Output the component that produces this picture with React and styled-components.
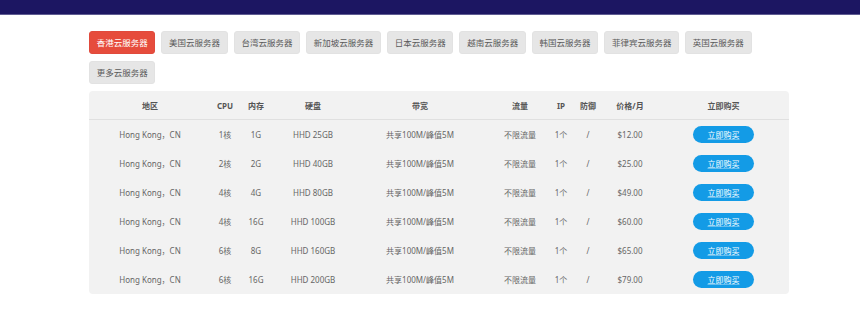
import React from "react";
import styled, { createGlobalStyle } from "styled-components";

const Global = createGlobalStyle`
  html, body { margin: 0; padding: 0; background: #fff; }
  body { font-family: "Noto Sans", "Noto Sans CJK SC", sans-serif; }
  * { box-sizing: border-box; }
`;

const TopBand = styled.div`
  height: 15px;
  background: #1c1662;
  border-bottom: 1px solid #5f5c92;
`;

const Main = styled.main`
  padding: 16px 71px 0 89px;
`;

const Tabs = styled.div`
  display: flex;
  flex-wrap: wrap;
  gap: 7px 6px;
  margin-bottom: 7px;
`;

const Tab = styled.button`
  height: 23px;
  padding: 0 6.7px;
  border: 1px solid ${(p) => (p.$active ? "#e04a3c" : "#e2e2e2")};
  border-radius: 3px;
  background: ${(p) => (p.$active ? "#e64c3c" : "#e6e6e6")};
  color: ${(p) => (p.$active ? "#fff" : "#5a5a5a")};
  font-family: "Noto Sans CJK SC", sans-serif;
  font-size: 8.5px;
  line-height: 21px;
  cursor: pointer;
`;

const Table = styled.div`
  width: 700px;
  background: #f2f2f2;
  border-radius: 4px;
  overflow: hidden;
`;

const cols = "122px 28px 34px 80px 134px 66px 16px 38px 46px 136px";

const HeadRow = styled.div`
  display: grid;
  grid-template-columns: ${cols};
  height: 28px;
  align-items: center;
  border-bottom: 1px solid #e0e0e0;
  box-sizing: content-box;
`;

const Row = styled.div`
  display: grid;
  grid-template-columns: ${cols};
  height: 29px;
  align-items: center;
`;

const Th = styled.div`
  text-align: center;
  font-family: "Noto Sans", "Noto Sans CJK SC", sans-serif;
  font-size: 8px;
  font-weight: 700;
  color: #555;
  white-space: nowrap;
  padding-left: ${(p) => (p.$pad ? "5px" : "0")};
`;

const Td = styled.div`
  text-align: center;
  font-family: "Noto Sans", "Noto Sans CJK SC", sans-serif;
  font-size: 8px;
  color: #666;
  white-space: nowrap;
`;

const BuyCell = styled.div`
  display: flex;
  justify-content: center;
  padding-left: 5px;
`;

const BuyButton = styled.a`
  display: inline-flex;
  align-items: center;
  justify-content: center;
  width: 61px;
  height: 17px;
  border-radius: 9px;
  background: #139be6;
  color: #fff;
  font-family: "Noto Sans CJK SC", sans-serif;
  font-size: 8px;
  text-decoration: underline;
  text-decoration-color: rgba(255, 255, 255, 0.35);
  cursor: pointer;
`;

const tabs = [
  "香港云服务器",
  "美国云服务器",
  "台湾云服务器",
  "新加坡云服务器",
  "日本云服务器",
  "越南云服务器",
  "韩国云服务器",
  "菲律宾云服务器",
  "英国云服务器",
  "更多云服务器",
];

const headers = ["地区", "CPU", "内存", "硬盘", "带宽", "流量", "IP", "防御", "价格/月"];

const rows = [
  ["1核", "1G", "HHD 25GB", "$12.00"],
  ["2核", "2G", "HHD 40GB", "$25.00"],
  ["4核", "4G", "HHD 80GB", "$49.00"],
  ["4核", "16G", "HHD 100GB", "$60.00"],
  ["6核", "8G", "HHD 160GB", "$65.00"],
  ["6核", "16G", "HHD 200GB", "$79.00"],
];

export default function App() {
  return (
    <>
      <Global />
      <TopBand />
      <Main>
        <Tabs>
          {tabs.map((t, i) => (
            <Tab key={t} $active={i === 0}>
              {t}
            </Tab>
          ))}
        </Tabs>
        <Table>
          <HeadRow>
            {headers.map((h) => (
              <Th key={h}>{h}</Th>
            ))}
            <Th $pad>立即购买</Th>
          </HeadRow>
          {rows.map(([cpu, mem, disk, price], i) => (
            <Row key={i}>
              <Td>Hong Kong，CN</Td>
              <Td>{cpu}</Td>
              <Td>{mem}</Td>
              <Td>{disk}</Td>
              <Td>共享100M/峰值5M</Td>
              <Td>不限流量</Td>
              <Td>1个</Td>
              <Td>/</Td>
              <Td>{price}</Td>
              <BuyCell>
                <BuyButton>立即购买</BuyButton>
              </BuyCell>
            </Row>
          ))}
        </Table>
      </Main>
    </>
  );
}
